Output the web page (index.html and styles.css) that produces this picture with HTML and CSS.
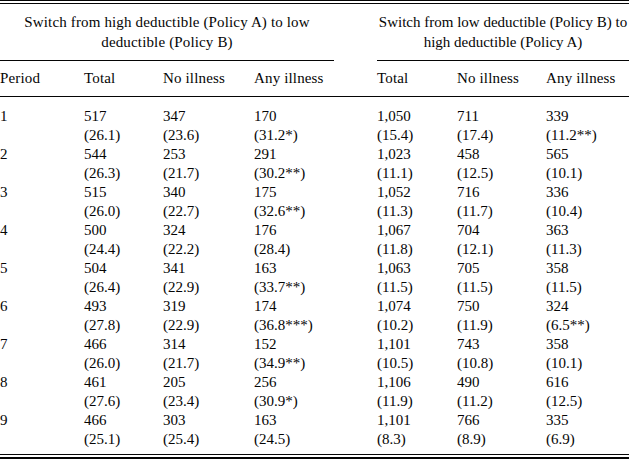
FILE: index.html
```html
<!DOCTYPE html>
<html lang="en">
<head>
<meta charset="utf-8">
<title>Switching table</title>
<link rel="stylesheet" href="styles.css">
</head>
<body>
<main class="sheet">
  <div class="grid head">
    <div class="span-head span-left">Switch from high deductible (Policy A) to low<br>deductible (Policy B)</div>
    <div class="span-head span-right">Switch from low deductible (Policy B) to<br>high deductible (Policy A)</div>
    <div class="colhead">Period</div><div class="colhead">Total</div><div class="colhead">No illness</div><div class="colhead">Any illness</div>
    <div class="colhead"></div>
    <div class="colhead">Total</div><div class="colhead">No illness</div><div class="colhead">Any illness</div>
  </div>
  <div class="grid body">
    <div>1</div><div>517</div><div>347</div><div>170</div><div></div><div>1,050</div><div>711</div><div>339</div>
    <div></div><div>(26.1)</div><div>(23.6)</div><div>(31.2*)</div><div></div><div>(15.4)</div><div>(17.4)</div><div>(11.2**)</div>
    <div>2</div><div>544</div><div>253</div><div>291</div><div></div><div>1,023</div><div>458</div><div>565</div>
    <div></div><div>(26.3)</div><div>(21.7)</div><div>(30.2**)</div><div></div><div>(11.1)</div><div>(12.5)</div><div>(10.1)</div>
    <div>3</div><div>515</div><div>340</div><div>175</div><div></div><div>1,052</div><div>716</div><div>336</div>
    <div></div><div>(26.0)</div><div>(22.7)</div><div>(32.6**)</div><div></div><div>(11.3)</div><div>(11.7)</div><div>(10.4)</div>
    <div>4</div><div>500</div><div>324</div><div>176</div><div></div><div>1,067</div><div>704</div><div>363</div>
    <div></div><div>(24.4)</div><div>(22.2)</div><div>(28.4)</div><div></div><div>(11.8)</div><div>(12.1)</div><div>(11.3)</div>
    <div>5</div><div>504</div><div>341</div><div>163</div><div></div><div>1,063</div><div>705</div><div>358</div>
    <div></div><div>(26.4)</div><div>(22.9)</div><div>(33.7**)</div><div></div><div>(11.5)</div><div>(11.5)</div><div>(11.5)</div>
    <div>6</div><div>493</div><div>319</div><div>174</div><div></div><div>1,074</div><div>750</div><div>324</div>
    <div></div><div>(27.8)</div><div>(22.9)</div><div>(36.8***)</div><div></div><div>(10.2)</div><div>(11.9)</div><div>(6.5**)</div>
    <div>7</div><div>466</div><div>314</div><div>152</div><div></div><div>1,101</div><div>743</div><div>358</div>
    <div></div><div>(26.0)</div><div>(21.7)</div><div>(34.9**)</div><div></div><div>(10.5)</div><div>(10.8)</div><div>(10.1)</div>
    <div>8</div><div>461</div><div>205</div><div>256</div><div></div><div>1,106</div><div>490</div><div>616</div>
    <div></div><div>(27.6)</div><div>(23.4)</div><div>(30.9*)</div><div></div><div>(11.9)</div><div>(11.2)</div><div>(12.5)</div>
    <div>9</div><div>466</div><div>303</div><div>163</div><div></div><div>1,101</div><div>766</div><div>335</div>
    <div></div><div>(25.1)</div><div>(25.4)</div><div>(24.5)</div><div></div><div>(8.3)</div><div>(8.9)</div><div>(6.9)</div>
  </div>
</main>
</body>
</html>
```

FILE: styles.css
```css
html, body {
  margin: 0;
  padding: 0;
  background: #ffffff;
  overflow: hidden;
}

.sheet {
  width: 629px;
  font-family: "Liberation Serif", "DejaVu Serif", "Times New Roman", serif;
  font-size: 15px;
  color: #050505;
  border-top: 1px solid #050505;
  border-bottom: 2px solid #050505;
  padding: 2px 0;
}

.grid {
  display: grid;
  grid-template-columns: 84px 79px 91px 80px 43px 80px 89px 83px;
  white-space: nowrap;
}

.head {
  border-top: 1.5px solid #050505;
}

.span-head {
  text-align: center;
  line-height: 20px;
  padding: 7.5px 0 8px;
  border-bottom: 1px solid #050505;
}

.span-left {
  grid-column: 1 / 5;
  letter-spacing: 0.15px;
}

.span-right {
  grid-column: 6 / 9;
}

.colhead {
  line-height: 19px;
  padding: 8px 0 8.5px;
  border-bottom: 1px solid #050505;
  letter-spacing: 0.15px;
}

.body {
  grid-auto-rows: 19px;
  line-height: 19px;
  padding: 9.5px 0 5px;
  border-bottom: 1px solid #050505;
}
```
